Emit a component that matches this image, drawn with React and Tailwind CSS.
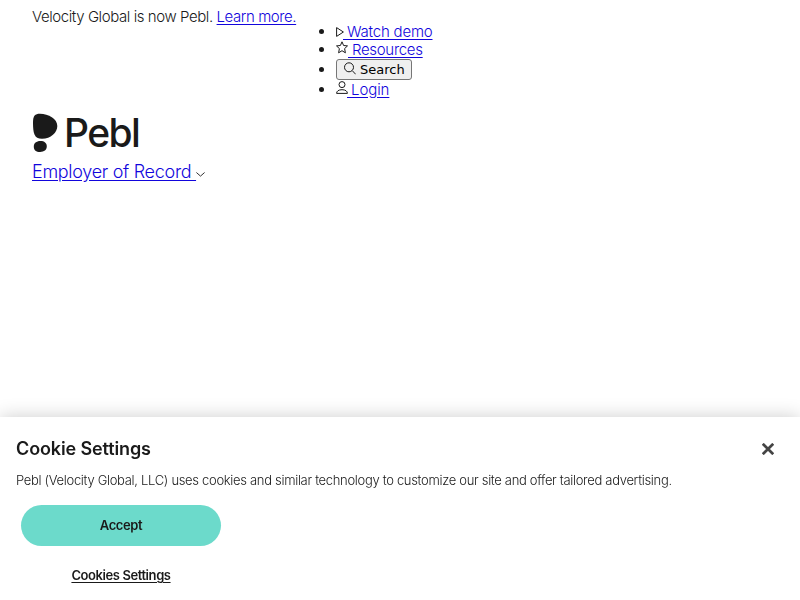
import React from 'react';

const PlayIcon = () => (
  <svg className="mt-[3px] h-[10px] w-[8px] shrink-0" viewBox="0 0 8 10" fill="none" stroke="#1a1a1a">
    <path d="M.6 .6v8.8L7.4 5z" strokeLinejoin="round" />
  </svg>
);

const StarIcon = () => (
  <svg className="h-[13px] w-[12px] shrink-0 -translate-y-px" viewBox="0 0 12 13" fill="none" stroke="#1a1a1a">
    <path d="M6 .8l1.600 3.700 3.900.4-2.900 2.700.8 4.200L6 9.700l-3.400 2.100.8-4.200L.5 4.900l3.900-.4z" strokeLinejoin="round" />
  </svg>
);

const SearchIcon = () => (
  <svg className="mb-[2px] h-[13px] w-[12px] shrink-0" viewBox="0 0 12 13" fill="none" stroke="#1a1a1a">
    <circle cx="5" cy="5.3" r="4.500" />
    <path d="M8.300 8.700l3.400 3.600" />
  </svg>
);

const UserIcon = () => (
  <svg className="h-[13px] w-[12px] shrink-0 -translate-y-px" viewBox="0 0 12 13" fill="none" stroke="#1a1a1a">
    <circle cx="6" cy="3.6" r="3" />
    <path d="M.6 12.400c0-2.300 2-3.700 5.400-3.700s5.400 1.400 5.400 3.700z" strokeLinejoin="round" />
  </svg>
);

const Logo = () => (
  <div className="flex h-[40px] items-center">
    <svg className="block h-[40px] w-[27px]" viewBox="0 0 27 40" fill="#1a1a1a">
      <path d="M1 9C1 3 3 .8 8 .8c8.500 0 17.300 5.200 17.300 12.200 0 6.500-6.500 12.800-15.300 12.800C2 25.800 1 20 1 9z" />
      <path d="M1.800 33.700c0-3.500 2.500-5.700 6.600-5.700 4 0 6.400 2 6.400 5.300 0 3.600-2.700 5.700-6.700 5.700-3.900 0-6.300-1.900-6.300-5.300z" />
    </svg>
    <span className="ml-[5px] text-[39px] leading-[48px] font-medium tracking-[-1.6px]">Pebl</span>
  </div>
);

const TopLink = ({ icon, children, className }) => (
  <a href="#" className="flex items-start text-[#1205dc]">
    {icon}
    <span className={`-mt-px whitespace-pre underline underline-offset-2 ${className}`}>{children}</span>
  </a>
);

const TopBar = () => (
  <div className="flex h-[105px] items-start pt-[8px] text-[15px] leading-[18px] font-light">
    <p className="w-[264px] whitespace-nowrap tracking-[-0.42px]">
      Velocity Global is now Pebl.{' '}
      <a href="#" className="text-[#1205dc] underline underline-offset-2">Learn more.</a>
    </p>
    <ul className="mt-[15px] list-disc pl-10">
      <li className="h-[18px]">
        <TopLink icon={<PlayIcon />} className="tracking-[-0.2px] -ml-px"> Watch demo</TopLink>
      </li>
      <li className="h-[18px]">
        <TopLink icon={<StarIcon />} className="tracking-[-0.3px]"> Resources</TopLink>
      </li>
      <li className="h-[22px] leading-[21px]">
        <button className="flex h-[21px] w-[76px] items-center gap-[4px] rounded-[3px] border border-[#767676] bg-[#efefef] pl-[7px] font-['DejaVu_Sans',sans-serif] text-[13px] font-normal text-black">
          <SearchIcon />
          Search
        </button>
      </li>
      <li className="h-[18px]">
        <TopLink icon={<UserIcon />} className="tracking-[-0.1px] -ml-px"> Login</TopLink>
      </li>
    </ul>
  </div>
);

const CookieBanner = () => (
  <section className="fixed inset-x-0 bottom-0 h-[183px] bg-white px-4 pt-[19px] shadow-[0_0_18px_rgba(0,0,0,0.2)]">
    <div className="flex items-center justify-between">
      <h2 className="text-[18px] leading-[26px] font-semibold tracking-[-0.12px]">Cookie Settings</h2>
      <button className="mr-[10px]" aria-label="Close">
        <svg className="block h-[12px] w-[12px]" viewBox="0 0 12 12" stroke="#444" strokeWidth="2.700">
          <path d="M.8 .8l10.400 10.400M11.200 .8L.8 11.200" />
        </svg>
      </button>
    </div>
    <p className="mt-[8px] text-[13px] leading-[20px] font-light whitespace-nowrap tracking-[-0.315px]">
      Pebl (Velocity Global, LLC) uses cookies and similar technology to customize our site and offer tailored advertising.
    </p>
    <div className="mt-[15px] ml-[5px] flex w-[200px] flex-col text-[13px] font-semibold">
      <button className="h-[41px] rounded-full bg-[#6cdacb] tracking-[-0.4px]">Accept</button>
      <button className="mt-[20px] h-[20px] underline underline-offset-2 tracking-[-0.42px]">Cookies Settings</button>
    </div>
  </section>
);

export default function App() {
  return (
    <div className="h-screen overflow-hidden bg-white font-['Inter',sans-serif] text-[#1a1a1a]">
      <header className="px-8">
        <TopBar />
        <div className="pt-[8px]">
          <Logo />
        </div>
        <a href="#" className="mt-[8px] flex items-center text-[18px] leading-[22px] font-light">
          <span className="whitespace-pre tracking-[-0.3px] text-[#1205dc] underline underline-offset-2">Employer of Record </span>
          <svg className="mt-[5px] h-[5px] w-[9px]" viewBox="0 0 9 5" fill="none" stroke="#333">
            <path d="M.4 .5l4.100 3.600L8.600 .5" />
          </svg>
        </a>
      </header>
      <CookieBanner />
    </div>
  );
}
